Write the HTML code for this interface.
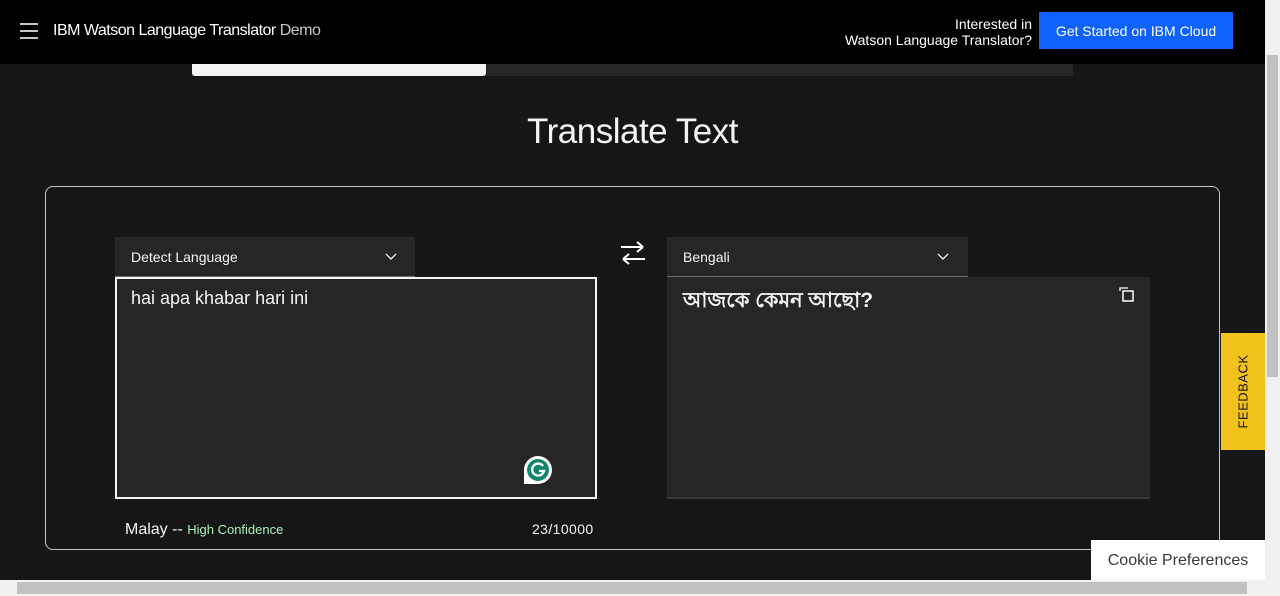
<!DOCTYPE html>
<html><head><style>
body{margin:0;width:1280px;height:596px;overflow:hidden;background:#161616;font-family:"Liberation Sans",sans-serif;position:relative}
.a{position:absolute}
</style></head><body>
<div class="a" style="left:0;top:0;width:1265px;height:64px;background:#000"></div>
<div class="a" style="left:20px;top:23px;width:18px;height:2px;background:#c6c6c6"></div>
<div class="a" style="left:20px;top:30px;width:18px;height:2px;background:#c6c6c6"></div>
<div class="a" style="left:20px;top:37px;width:18px;height:2px;background:#c6c6c6"></div>
<div class="a" style="left:53px;top:22px;color:#fff;font-size:16px;letter-spacing:-0.5px">IBM Watson Language Translator <span style="color:#c6c6c6">Demo</span></div>
<div class="a" style="right:248px;top:16px;color:#fff;font-size:14px;text-align:right;line-height:16px">Interested in<br>Watson Language Translator?</div>
<div class="a" style="left:1039px;top:12px;width:194px;height:37px;background:#0f62fe;color:#fff;font-size:14px;line-height:38px;text-align:center">Get Started on IBM Cloud</div>
<div class="a" style="left:192px;top:64px;width:881px;height:12px;background:#262626"></div>
<div class="a" style="left:192px;top:64px;width:294px;height:12px;background:#f4f4f4;border-radius:0 0 3px 3px"></div>
<div class="a" style="left:0;width:1265px;top:112px;text-align:center;color:#f4f4f4;font-size:35px;font-weight:300;letter-spacing:-0.5px">Translate Text</div>
<div class="a" style="left:45px;top:186px;width:1173px;height:362px;border:1px solid #c6c6c6;border-radius:8px"></div>
<div class="a" style="left:115px;top:237px;width:300px;height:39px;background:#262626;border-bottom:1px solid #6f6f6f;color:#f4f4f4;font-size:14px"><span class="a" style="left:16px;top:12px">Detect Language</span>
<svg class="a" style="left:270px;top:14px" width="12" height="10"><path d="M1 3l5 5 5-5" stroke="#f4f4f4" fill="none" stroke-width="1.3"/></svg></div>
<div class="a" style="left:115px;top:277px;width:478px;height:218px;background:#262626;border:2px solid #f4f4f4"></div>
<div class="a" style="left:131px;top:288px;color:#f4f4f4;font-size:18px">hai apa khabar hari ini</div>
<svg class="a" style="left:523px;top:455px" width="30" height="30"><path d="M15 1a14 14 0 1 1 0 28H1V15A14 14 0 0 1 15 1z" fill="#fff"/><circle cx="15" cy="15" r="11" fill="#15846e"/><path d="M20 11a6 6 0 1 0 1 5h-5" stroke="#fff" stroke-width="2.3" fill="none"/></svg>
<div class="a" style="left:125px;top:521px;color:#f4f4f4;font-size:16px">Malay -- <span style="color:#a7f0ba;font-size:13px">High Confidence</span></div>
<div class="a" style="left:532px;top:521px;color:#f4f4f4;font-size:14px;letter-spacing:0.4px">23/10000</div>
<svg class="a" style="left:619px;top:240px" width="28" height="26"><path d="M2 7h22M18 2l6 5M26 19H4M10 14l-6 5M4 19l6 5M24 7l-6 5" stroke="#fff" fill="none" stroke-width="2"/></svg>
<div class="a" style="left:667px;top:237px;width:301px;height:39px;background:#262626;border-bottom:1px solid #6f6f6f;color:#f4f4f4;font-size:14px"><span class="a" style="left:16px;top:12px">Bengali</span>
<svg class="a" style="left:270px;top:14px" width="12" height="10"><path d="M1 3l5 5 5-5" stroke="#f4f4f4" fill="none" stroke-width="1.3"/></svg></div>
<div class="a" style="left:667px;top:277px;width:483px;height:220px;background:#262626;border-bottom:2px solid #393939"></div>
<div class="a" style="left:683px;top:284px;color:#f4f4f4;font-size:21px;font-weight:bold;font-family:'Liberation Sans','Noto Sans CJK SC',sans-serif">আজকে কেমন আছো?</div>
<svg class="a" style="left:1119px;top:287px" width="16" height="16"><path d="M1 4V1h8" stroke="#fff" fill="none" stroke-width="1.3"/><rect x="4" y="4" width="10" height="10" stroke="#fff" fill="none" stroke-width="1.5"/></svg>
<div class="a" style="left:1221px;top:333px;width:44px;height:117px;background:#f1c21b"></div>
<div class="a" style="left:1221px;top:333px;width:44px;height:117px;display:flex;align-items:center;justify-content:center"><span style="transform:rotate(-90deg);font-size:13px;letter-spacing:0.5px;color:#161616;white-space:nowrap">FEEDBACK</span></div>
<div class="a" style="left:1091px;top:540px;width:174px;height:40px;background:#fff;color:#393939;font-size:16px;line-height:42px;text-align:center">Cookie Preferences</div>
<div class="a" style="left:1265px;top:0;width:15px;height:596px;background:#f1f1f1"></div>
<div class="a" style="left:1267px;top:55px;width:11px;height:322px;background:#c1c1c1"></div>
<div class="a" style="left:0;top:580px;width:1265px;height:16px;background:#f1f1f1"></div>
<div class="a" style="left:17px;top:582px;width:1230px;height:12px;background:#c1c1c1"></div>
</body></html>
